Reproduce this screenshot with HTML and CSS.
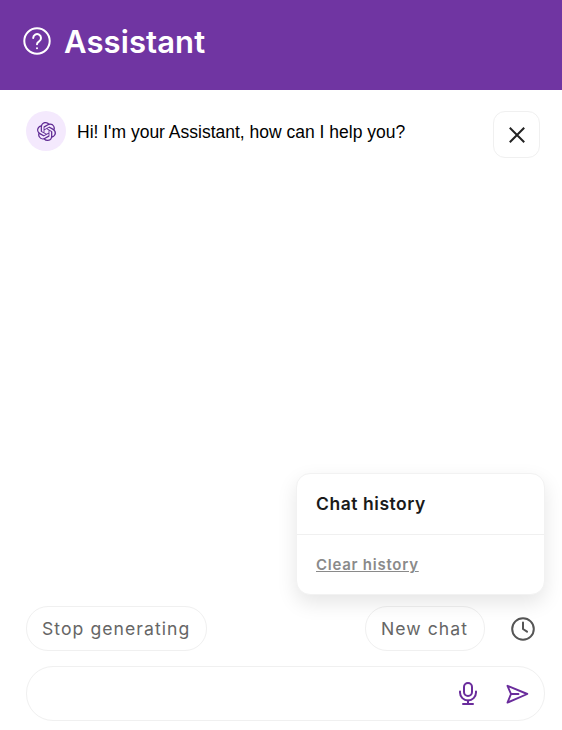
FILE: index.html
```html
<!DOCTYPE html>
<html lang="en">
<head>
    <meta charset="UTF-8">
    <meta name="viewport" content="width=device-width, initial-scale=1.0">
    <title>Assistant</title>
    <link rel="stylesheet" href="styles.css">
</head>
<body>
    <header class="header">
        <svg class="header-icon" viewBox="0 0 28 28" fill="none" stroke="currentColor" stroke-width="2" stroke-linecap="round" stroke-linejoin="round">
            <circle cx="14" cy="14" r="12.7"/>
            <path d="M10.2 11a3.9 3.9 0 1 1 5.9 3.4c-1.4.8-2.1 1.4-2.1 2.8"/>
            <path d="M14 21.2v.1"/>
        </svg>
        <h1>Assistant</h1>
    </header>

    <main class="chat">
        <div class="messages">
            <div class="message">
                <div class="avatar">
                    <svg class="avatar-icon" viewBox="0 0 24 24" fill="currentColor">
                        <path d="M22.2819 9.8211a5.9847 5.9847 0 0 0-.5157-4.9108 6.0462 6.0462 0 0 0-6.5098-2.9A6.0651 6.0651 0 0 0 4.9807 4.1818a5.9847 5.9847 0 0 0-3.9977 2.9 6.0462 6.0462 0 0 0 .7427 7.0966 5.98 5.98 0 0 0 .511 4.9107 6.051 6.051 0 0 0 6.5146 2.9001A5.9847 5.9847 0 0 0 13.2599 24a6.0557 6.0557 0 0 0 5.7718-4.2058 5.9894 5.9894 0 0 0 3.9977-2.9001 6.0557 6.0557 0 0 0-.7475-7.0729zm-9.022 12.6081a4.4755 4.4755 0 0 1-2.8764-1.0408l.1419-.0804 4.7783-2.7582a.7948.7948 0 0 0 .3927-.6813v-6.7369l2.02 1.1686a.071.071 0 0 1 .038.052v5.5826a4.504 4.504 0 0 1-4.4945 4.4944zm-9.6607-4.1254a4.4708 4.4708 0 0 1-.5346-3.0137l.142.0852 4.783 2.7582a.7712.7712 0 0 0 .7806 0l5.8428-3.3685v2.3324a.0804.0804 0 0 1-.0332.0615L9.74 19.9502a4.4992 4.4992 0 0 1-6.1408-1.6464zM2.3408 7.8956a4.485 4.485 0 0 1 2.3655-1.9728V11.6a.7664.7664 0 0 0 .3879.6765l5.8144 3.3543-2.0201 1.1685a.0757.0757 0 0 1-.071 0l-4.8303-2.7865A4.504 4.504 0 0 1 2.3408 7.872zm16.5963 3.8558L13.1038 8.364 15.1192 7.2a.0757.0757 0 0 1 .071 0l4.8303 2.7913a4.4944 4.4944 0 0 1-.6765 8.1042v-5.6772a.79.79 0 0 0-.407-.667zm2.0107-3.0231l-.142-.0852-4.7735-2.7818a.7759.7759 0 0 0-.7854 0L9.409 9.2297V6.8974a.0662.0662 0 0 1 .0284-.0615l4.8303-2.7866a4.4992 4.4992 0 0 1 6.6802 4.66zM8.3065 12.863l-2.02-1.1638a.0804.0804 0 0 1-.038-.0567V6.0742a4.4992 4.4992 0 0 1 7.3757-3.4537l-.142.0805L8.704 5.459a.7948.7948 0 0 0-.3927.6813zm1.0976-2.3654l2.602-1.4998 2.6069 1.4998v2.9994l-2.5974 1.4997-2.6067-1.4997Z"/>
                    </svg>
                </div>
                <p class="message-text">Hi! I'm your Assistant, how can I help you?</p>
            </div>
            <button class="close-btn" aria-label="Close">
                <svg viewBox="0 0 16 16" fill="none" stroke="currentColor" stroke-width="2" stroke-linecap="square">
                    <path d="M1.5 1.5l13 13M14.5 1.5l-13 13"/>
                </svg>
            </button>
        </div>

        <!-- history popup, sits over the empty message area -->
        <div class="history-popup">
            <div class="history-title">Chat history</div>
            <div class="history-actions"><a href="#">Clear history</a></div>
        </div>

        <div class="actions">
            <button class="pill">Stop generating</button>
            <div class="actions-right">
                <button class="pill">New chat</button>
                <button class="history-btn" aria-label="History">
                    <svg viewBox="0 0 24 24" fill="none" stroke="currentColor" stroke-width="2" stroke-linecap="round" stroke-linejoin="round">
                        <circle cx="12" cy="12" r="10.8"/>
                        <path d="M12 5.6V12l4 2.6"/>
                    </svg>
                </button>
            </div>
        </div>

        <div class="input-box">
            <input class="input" type="text" aria-label="Message">
            <svg class="mic-icon" viewBox="0 0 18 23" fill="none" stroke="currentColor" stroke-width="2" stroke-linecap="round" stroke-linejoin="round">
                <rect x="5" y="1" width="8" height="13" rx="4"/>
                <path d="M1 9.5v1a8 8 0 0 0 16 0v-1"/>
                <path d="M9 18.5V22M4 22h10"/>
            </svg>
            <svg class="send-icon" viewBox="0 0 24 20" fill="none" stroke="currentColor" stroke-width="1.9" stroke-linecap="round" stroke-linejoin="round">
                <path d="M2.5 1.8L22.3 10 2.5 18.6 6 10z"/>
                <path d="M6 10h7.5"/>
            </svg>
        </div>
    </main>
</body>
</html>
```

FILE: styles.css
```css
* {
    margin: 0;
    padding: 0;
    box-sizing: border-box;
}

body {
    height: 100vh;
    display: flex;
    flex-direction: column;
    font-family: 'Inter', 'Liberation Sans', sans-serif;
    background-color: #fff;
    color: #111;
    overflow: hidden;
}

.header {
    height: 90px;
    flex-shrink: 0;
    display: flex;
    align-items: center;
    gap: 13px;
    padding: 0 23px 8px;
    background-color: #7035a2;
    color: #fff;
}

.header-icon {
    width: 28px;
    height: 28px;
}

.header h1 {
    font-size: 31px;
    font-weight: 600;
    letter-spacing: 0.1px;
}

.chat {
    position: relative;
    flex: 1;
    display: flex;
    flex-direction: column;
    padding: 21px 17px 9px 26px;
}

.messages {
    flex: 1;
    display: flex;
    justify-content: space-between;
    align-items: flex-start;
    padding-right: 5px;
}

.message {
    display: flex;
    gap: 11px;
}

.avatar {
    width: 40px;
    height: 40px;
    border-radius: 50%;
    display: flex;
    align-items: center;
    justify-content: center;
    background-color: #f4e9fd;
    color: #5f2a93;
}

.avatar-icon {
    width: 19px;
    height: 19px;
}

.message-text {
    font-family: 'Liberation Sans', Arial, sans-serif;
    font-size: 17.5px;
    line-height: 42px;
    color: #000;
}

.close-btn {
    width: 47px;
    height: 47px;
    display: flex;
    align-items: center;
    justify-content: center;
    background: #fff;
    border: 1px solid #f0f0f0;
    border-radius: 12px;
    color: #222;
}

.close-btn svg {
    width: 16px;
    height: 16px;
}

.history-popup {
    position: absolute;
    right: 17px;
    bottom: 135px;
    width: 249px;
    height: 122px;
    background: #fff;
    border: 1px solid #f2f2f2;
    border-radius: 14px;
    box-shadow: 0 8px 20px rgba(0, 0, 0, 0.1);
}

.history-title {
    height: 61px;
    padding: 0 19px 2px;
    display: flex;
    align-items: center;
    border-bottom: 1px solid #f0f0f0;
    font-size: 17.5px;
    font-weight: 600;
    letter-spacing: 0.55px;
    color: #1a1a1a;
}

.history-actions {
    height: 60px;
    padding: 0 19px 1px;
    display: flex;
    align-items: center;
}

.history-actions a {
    font-size: 15px;
    font-weight: 600;
    letter-spacing: 0.75px;
    color: #8a8a8a;
}

.actions {
    display: flex;
    justify-content: space-between;
    align-items: center;
    margin-bottom: 15px;
}

.actions-right {
    display: flex;
    align-items: center;
    gap: 26px;
}

.pill {
    height: 45px;
    padding: 0 16px 0 15px;
    background: #fff;
    border: 1px solid #f0f0f0;
    border-radius: 22px;
    font-family: inherit;
    font-size: 17.6px;
    letter-spacing: 1.05px;
    color: #666;
}

.history-btn {
    width: 24px;
    height: 24px;
    margin-right: 10px;
    background: none;
    border: none;
    color: #555;
}

.history-btn svg {
    display: block;
    width: 24px;
    height: 24px;
}

.input-box {
    height: 55px;
    display: flex;
    align-items: center;
    padding: 0 15px 0 20px;
    border: 1px solid #f0f0f0;
    border-radius: 27px;
}

.input {
    flex: 1;
    min-width: 0;
    border: none;
    outline: none;
}

.mic-icon {
    width: 18px;
    height: 23px;
    margin-right: 28px;
    color: #6a2c9c;
}

.send-icon {
    width: 24px;
    height: 20px;
    color: #6a2c9c;
}
```
